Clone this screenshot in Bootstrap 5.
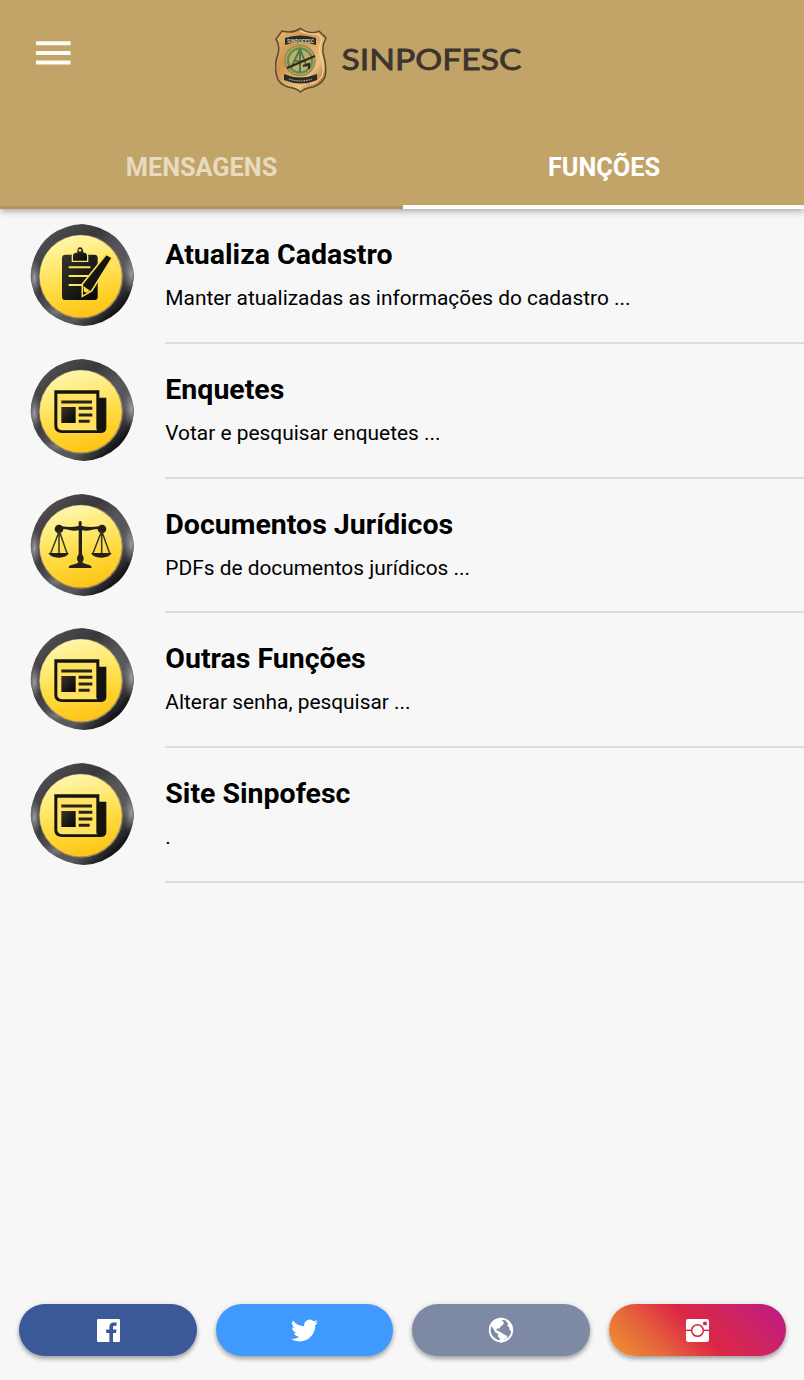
<!DOCTYPE html>
<html lang="pt-BR">
<head>
<meta charset="utf-8">
<meta name="viewport" content="width=device-width, initial-scale=1">
<title>Sinpofesc</title>
<link href="https://cdn.jsdelivr.net/npm/bootstrap@5.3.0/dist/css/bootstrap.min.css" rel="stylesheet">
<style>
body{font-family:Roboto,"Liberation Sans",sans-serif;background:#f7f7f7;color:#000;height:1380px;overflow:hidden}
.app-head{background:#c2a469;height:209.4px;box-shadow:0 2px 7px rgba(0,0,0,.35)}
.app-bar{height:128px;padding:0 36px;display:grid;grid-template-columns:239px auto 1fr}
.menu-btn{width:36px;height:24px;margin-top:41px}
.brand-logo{margin-top:26px}
.tab-row{height:81.4px}
.tab-row .nav-link{color:#e7dabf;font-weight:700;font-size:25.3px;line-height:30px;padding:25px 0 0;height:81.4px;border:0;border-bottom:3px solid #b59460;border-radius:0}
.tab-row .nav-link:first-child{flex:0 0 403px}
.tab-row .nav-link.active{color:#fff;background:none;border-bottom:4px solid #fffdf8;padding-left:1px}
.func-row{height:134.7px;padding-left:30px;gap:30px}
.func-row .disc{margin-top:14px;width:105px;height:104px;flex:none;filter:blur(.4px)}
.func-body{border-bottom:2px solid #dcdcdc;height:134.7px;padding:29px 0 0 .3px}
.func-body h2{font-size:28.5px;font-weight:700;line-height:34px;margin:0 0 13px}
.func-body p{font-size:20.88px;line-height:26px;margin:0}
.social{padding:0 18px 24px 19.3px;gap:19px}
.social .btn{flex:1 1 0;height:52px;border:0;border-radius:26px;padding:0;box-shadow:0 3px 4px rgba(0,0,0,.28),0 1px 6px rgba(0,0,0,.12)}
.fb{background:#3b5998}.tw{background:#4099ff}.web{background:#7e89a3}
.ig{background:linear-gradient(45deg,#f09433 0%,#e6683c 25%,#dc2743 50%,#cc2366 75%,#bc1888 100%)}
</style>
</head>
<body class="d-flex flex-column">
<svg width="0" height="0" class="position-absolute" aria-hidden="true">
<defs>
<linearGradient id="rim" x1="0" y1="0" x2="1" y2="1"><stop offset="0" stop-color="#77777a"/><stop offset=".18" stop-color="#4a484b"/><stop offset=".36" stop-color="#39383b"/><stop offset=".52" stop-color="#55555a"/><stop offset=".68" stop-color="#59595d"/><stop offset=".83" stop-color="#151517"/><stop offset="1" stop-color="#444"/></linearGradient>
<radialGradient id="glint"><stop offset="0" stop-color="#aaaaae" stop-opacity=".9"/><stop offset="1" stop-color="#77777a" stop-opacity="0"/></radialGradient>
<linearGradient id="gold" x1=".35" y1="0" x2=".6" y2="1"><stop offset="0" stop-color="#fff6ae"/><stop offset=".3" stop-color="#ffeb78"/><stop offset=".65" stop-color="#ffd83a"/><stop offset="1" stop-color="#ffc313"/></linearGradient>
<linearGradient id="ink" x1="0" y1="0" x2="1" y2="1"><stop offset="0" stop-color="#38342c"/><stop offset="1" stop-color="#050505"/></linearGradient>
<clipPath id="rimclip"><path d="M187 27Q243 32 286 66Q334 112 342 180Q338 246 296 289Q250 331 192 333Q134 330 87 294Q45 258 36 210Q27 180 38 144Q52 92 92 60Q134 30 187 27Z"/></clipPath>
<symbol id="disc" viewBox="30 24 315 312">
<g clip-path="url(#rimclip)"><path fill="url(#rim)" d="M30 24h315v312H30z"/><ellipse cx="334" cy="177" rx="26" ry="66" fill="url(#glint)"/><ellipse cx="43" cy="190" rx="22" ry="60" fill="url(#glint)"/><ellipse cx="108" cy="290" rx="42" ry="22" fill="url(#glint)" opacity=".5"/></g>
<circle cx="183" cy="185" r="126" fill="#9b8965"/><circle cx="182" cy="184" r="123" fill="url(#gold)"/>
</symbol>
<symbol id="news" viewBox="30 24 315 312">
<path fill="#151410" d="M103 121h135v22h21v91q0 15-18 15H124q-21-2-21-21z"/>
<path fill="#ffe260" d="M112 131h117v104q0 4 3 6H125q-12-2-13-12z"/>
<path stroke="#26231a" stroke-width="9" d="M124 156h92M176 175h41M176 195h41M176 214h33"/>
<path fill="url(#ink)" d="M124 171h43v48h-43z"/>
</symbol>
</defs>
</svg>

<header class="app-head flex-shrink-0">
<div class="app-bar">
<svg class="menu-btn" viewBox="0 0 36 24" role="img" aria-label="Menu"><path stroke="#fffdf8" stroke-width="4" d="M0 2.300h34.500M0 12h34.500M0 21.500h34.500"/></svg>
<svg class="brand-logo" width="250" height="70" viewBox="275 26 250 70">
<defs><linearGradient id="shield" x1="0" y1="0" x2="1" y2="1"><stop offset="0" stop-color="#e3b878"/><stop offset=".35" stop-color="#cf9550"/><stop offset=".7" stop-color="#eec080"/><stop offset="1" stop-color="#84501f"/></linearGradient></defs>
<path d="M300.500 28.500Q307 33 315 32.500L319 31L326 38Q321 47 324 57Q327 68 325 77Q322 84 313 87Q305 88 300.500 92Q296 88 288 87Q279 84 277 77Q274 68 277 57Q281 47 276 39L282 31Q292 34 300.500 28.500Z" fill="url(#shield)" stroke="#5e4a30" stroke-width="1.500"/>
<path d="M300.500 31Q308 35 318 34L322 39Q318 48 321 57Q325 68 322 76Q318 83 310 84" fill="none" stroke="#f6d69c" stroke-width="1.200"/>
<circle cx="300" cy="60.500" r="15" fill="#d0a468" stroke="#8b8e4c" stroke-width="1.500"/>
<circle cx="300" cy="60.500" r="12" fill="#bfae6c" stroke="#5f8d50" stroke-width="2.400"/>
<path d="M291 68L300 49L307 67M300 52v20M294 61h12" fill="none" stroke="#4f7a48" stroke-width="2"/>
<path d="M287 68L315 56M303 66l6-2v5" stroke="#30261d" stroke-width="2" fill="none"/>
<path d="M285 38Q300 33 316 38V45Q300 39 285 45Z" fill="#292929"/><path d="M284 74Q300 81 317 74V80Q301 87 284 80Z" fill="#292929"/>
<text x="287" y="42.500" font-family="Roboto,sans-serif" font-size="5" font-weight="700" fill="#d6cda9" textLength="27">SINPOFESC</text>
<path d="M289 79Q300 83 312 79" fill="none" stroke="#c9b98f" stroke-width="1.200" stroke-dasharray="1.500 1"/>
<text x="341.500" y="70" font-family="Lato,sans-serif" font-size="29" font-weight="400" fill="#3c342d" stroke="#3c342d" stroke-width=".8" textLength="180" lengthAdjust="spacingAndGlyphs">SINPOFESC</text>
</svg>
</div>
<nav class="nav nav-fill tab-row flex-nowrap">
<a class="nav-link" href="#">MENSAGENS</a><a class="nav-link active" href="#">FUNÇÕES</a>
</nav>
</header>

<main class="flex-grow-1">
<div class="func-row d-flex">
<svg class="disc" viewBox="30 24 315 312"><use href="#disc" x="30" y="24" width="315" height="312"/>
<path fill="url(#ink)" d="M137 119h86q10 0 10 10v117q0 9-9 9h-88q-10 0-10-10V129q0-10 11-10z"/>
<path d="M146 157h65M146 183h65M146 210h43" stroke="#ffe35e" stroke-width="6"/>
<path d="M157 139v-16q0-12 13-12 0-16 10-16t12 16q11 0 11 12v16z" fill="url(#ink)" stroke="#ffe778" stroke-width="4"/><circle cx="180" cy="106" r="4" fill="#ffe778"/>
<path d="M259 118l18 10-62 100-28 16 0-37z" fill="#151410" stroke="#ffdf50" stroke-width="5"/><path d="M190 213l20 14-17 9z" fill="#ffda43"/><path d="M190 229l9 5-10 6z" fill="#151410"/></svg>
<div class="func-body flex-grow-1"><h2>Atualiza Cadastro</h2><p>Manter atualizadas as informações do cadastro ...</p></div>
</div>
<div class="func-row d-flex">
<svg class="disc" viewBox="30 24 315 312"><use href="#disc" x="30" y="24" width="315" height="312"/><use href="#news" x="30" y="24" width="315" height="312"/></svg>
<div class="func-body flex-grow-1"><h2>Enquetes</h2><p>Votar e pesquisar enquetes ...</p></div>
</div>
<div class="func-row d-flex">
<svg class="disc" viewBox="30 24 315 312"><use href="#disc" x="30" y="24" width="315" height="312"/>
<g fill="#24211a"><circle cx="117" cy="132" r="13"/><circle cx="246" cy="132" r="13"/><path d="M112 121Q145 130 176 123V112q5-8 9 0v11q33 7 66-2v12q-22-2-37 2-14 4-28 1v72q10 12 1 24 4 5 24 9 4 3 4 8h-69q0-5 5-8 22-4 24-9-9-12 1-24v-72q-15 3-28-1-16-5-36-2z"/><path d="M85 204h62q-7 14-31 14t-31-14zM213 204h62q-7 14-31 14t-31-14z"/></g>
<path d="M118 138L92 205M117 138v67M118 138l23 67M245 138l-26 67M245 138v67M245 138l24 67" stroke="#3b3522" stroke-width="4.500"/></svg>
<div class="func-body flex-grow-1"><h2>Documentos Jurídicos</h2><p>PDFs de documentos jurídicos ...</p></div>
</div>
<div class="func-row d-flex">
<svg class="disc" viewBox="30 24 315 312"><use href="#disc" x="30" y="24" width="315" height="312"/><use href="#news" x="30" y="24" width="315" height="312"/></svg>
<div class="func-body flex-grow-1"><h2>Outras Funções</h2><p>Alterar senha, pesquisar ...</p></div>
</div>
<div class="func-row d-flex">
<svg class="disc" viewBox="30 24 315 312"><use href="#disc" x="30" y="24" width="315" height="312"/><use href="#news" x="30" y="24" width="315" height="312"/></svg>
<div class="func-body flex-grow-1"><h2>Site Sinpofesc</h2><p>.</p></div>
</div>
</main>

<footer class="social d-flex">
<a class="btn fb d-flex align-items-center justify-content-center" href="#" aria-label="Facebook"><svg width="23" height="23" viewBox="0 0 23 23"><path fill="#fff" d="M1.200 0H21.800Q23 0 23 1.200V21.800Q23 23 21.800 23H16V14h3l.5-3.500H16V8.300c0-1.100.5-1.600 1.700-1.600h1.900V3.600h-2.700c-3 0-4.500 1.700-4.500 4.300v2.600H9.200V14h3.200v9H1.200Q0 23 0 21.800V1.200Q0 0 1.200 0z"/></svg></a>
<a class="btn tw d-flex align-items-center justify-content-center" href="#" aria-label="Twitter"><svg width="27" height="27" viewBox="0 0 24 24"><path fill="#fff" d="M23.950 4.570a10 10 0 0 1-2.820.77 4.960 4.960 0 0 0 2.160-2.720c-.95.550-2 .960-3.130 1.180a4.920 4.920 0 0 0-8.380 4.480A13.930 13.930 0 0 1 1.640 3.160a4.920 4.920 0 0 0 1.520 6.570 4.900 4.900 0 0 1-2.230-.61v.06c0 2.380 1.700 4.370 3.950 4.820a5 5 0 0 1-2.210.09 4.930 4.930 0 0 0 4.600 3.420A9.870 9.870 0 0 1 0 19.540a13.940 13.940 0 0 0 7.550 2.210c9.050 0 14-7.500 14-13.980l-.02-.64a9.940 9.940 0 0 0 2.420-2.560z"/></svg></a>
<a class="btn web d-flex align-items-center justify-content-center" href="#" aria-label="Site"><svg width="26" height="26" viewBox="0 0 26 26"><circle cx="13" cy="13" r="11.300" fill="none" stroke="#fff" stroke-width="1.800"/><path fill="#fff" d="M5 5Q9 1 15 1.700L14 4.200l2 .8-1 3-2 1-1.500 2.500-2-.3-1.500 2 2 .5 4 2.300 3 2 2.500 1-1 2.500-2 1-2 3.200-3-.2.200-4-2-2.500.7-2-3-1.500L6 13 3 8zM18.500 3l4 3.500 2 4.500-.2 4-2.500-1.500-.5-3-2-2 1-2-2-2z"/></svg></a>
<a class="btn ig d-flex align-items-center justify-content-center" href="#" aria-label="Instagram"><svg width="23" height="23" viewBox="0 0 23 23"><rect width="23" height="23" rx="2.300" fill="#fff"/><path stroke="#d6253f" stroke-width="1.400" d="M0 11.300h23"/><circle cx="11.500" cy="11.500" r="5.800" fill="#fff" stroke="#d6253f" stroke-width="1.500"/><rect x="17.200" y="2.700" width="3.600" height="3.600" rx=".6" fill="#d22655"/></svg></a>
</footer>
<script src="https://cdn.jsdelivr.net/npm/bootstrap@5.3.0/dist/js/bootstrap.bundle.min.js"></script>
</body>
</html>
